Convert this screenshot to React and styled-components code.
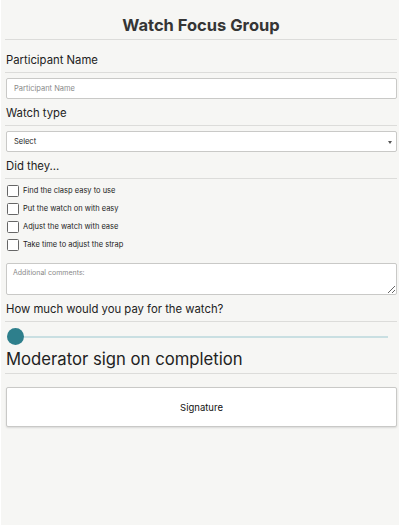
import React from "react";
import styled, { createGlobalStyle } from "styled-components";

const Global = createGlobalStyle`
  html, body { margin: 0; padding: 0; background: #ffffff; }
  body { font-family: Inter, "Noto Sans", sans-serif; color: #222; }
  * { box-sizing: border-box; }
`;

const Page = styled.div`
  margin: 0 1px 1px 1px;
  min-height: 525px;
  background: #f6f6f4;
  padding: 0 2px 0 4px;
  display: flex;
  flex-direction: column;
`;

const Title = styled.h1`
  margin: 0;
  padding: 14px 0 3px;
  line-height: 22px;
  font-size: 16.5px;
  font-weight: 700;
  text-align: center;
  color: #353535;
  border-bottom: 1px solid #dcdcda;
`;

const Heading = styled.h2`
  margin: 0;
  padding: ${(p) => (p.$first ? "12px" : p.$big ? "0" : "6px")} 0 4px 1px;
  line-height: ${(p) => (p.$big ? "20px" : "16px")};
  font-size: ${(p) => (p.$big ? "16.7px" : "11.3px")};
  font-weight: 400;
  color: #222;
  border-bottom: 1px solid #dcdcda;
`;

const Input = styled.input`
  display: block;
  margin: 5px 0 0 1px;
  width: calc(100% - 1px);
  height: 21px;
  padding: 0 7px;
  border: 1px solid #c9c9c7;
  border-radius: 2px;
  background: #fff;
  font: inherit;
  font-size: 7.5px;
  outline: none;
  &::placeholder { color: #8a8a8a; }
`;

const SelectBox = styled.div`
  margin: 5px 0 0 1px;
  height: 21px;
  padding: 0 4px 0 7px;
  border: 1px solid #c9c9c7;
  border-radius: 2px;
  background: #fff;
  display: flex;
  align-items: center;
  justify-content: space-between;
  font-size: 7.5px;
  color: #222;
`;

const Caret = styled.span`
  width: 0;
  height: 0;
  border-left: 2.5px solid transparent;
  border-right: 2.5px solid transparent;
  border-top: 3px solid #555;
  margin-top: 1px;
`;

const CheckList = styled.div`
  display: flex;
  flex-direction: column;
  gap: 6px;
  padding: 6px 0 0 2px;
`;

const CheckRow = styled.label`
  display: flex;
  align-items: center;
  gap: 4px;
  height: 12px;
  line-height: 12px;
  font-size: 7.5px;
  color: #222;
`;

const Box = styled.span`
  width: 12px;
  height: 12px;
  border: 1px solid #666;
  border-radius: 1.5px;
  background: #fff;
  flex: none;
`;

const TextArea = styled.textarea`
  display: block;
  margin: 12px 0 0 1px;
  width: calc(100% - 1px);
  height: 32px;
  padding: 4px 6px;
  border: 1px solid #c9c9c7;
  border-radius: 2px;
  background: #fff;
  font: inherit;
  font-size: 7px;
  outline: none;
  resize: vertical;
  &::placeholder { color: #8a8a8a; }
`;

const SliderWrap = styled.div`
  position: relative;
  height: 25px;
  margin: 2px 9px 0 2px;
  display: flex;
  align-items: center;
`;

const Track = styled.div`
  flex: 1;
  height: 2px;
  background: #c9dfe2;
  margin-left: 8px;
`;

const Thumb = styled.div`
  position: absolute;
  left: 0;
  top: 4px;
  width: 17px;
  height: 17px;
  border-radius: 50%;
  background: #2e7f8c;
`;

const Signature = styled.div`
  margin: 13px 0 0 1px;
  height: 40px;
  border: 1px solid #c9c9c7;
  border-radius: 2px;
  background: #fff;
  box-shadow: 0 1px 2px rgba(0,0,0,0.12);
  display: flex;
  align-items: center;
  justify-content: center;
  font-size: 9.5px;
  color: #111;
`;

const items = [
  "Find the clasp easy to use",
  "Put the watch on with easy",
  "Adjust the watch with ease",
  "Take time to adjust the strap",
];

export default function App() {
  return (
    <>
      <Global />
      <Page>
        <Title>Watch Focus Group</Title>
        <Heading $first>Participant Name</Heading>
        <Input placeholder="Participant Name" />
        <Heading>Watch type</Heading>
        <SelectBox>
          <span>Select</span>
          <Caret />
        </SelectBox>
        <Heading>Did they...</Heading>
        <CheckList>
          {items.map((t) => (
            <CheckRow key={t}>
              <Box />
              <span>{t}</span>
            </CheckRow>
          ))}
        </CheckList>
        <TextArea placeholder="Additional comments:" />
        <Heading>How much would you pay for the watch?</Heading>
        <SliderWrap>
          <Track />
          <Thumb />
        </SliderWrap>
        <Heading $big>Moderator sign on completion</Heading>
        <Signature>Signature</Signature>
      </Page>
    </>
  );
}
